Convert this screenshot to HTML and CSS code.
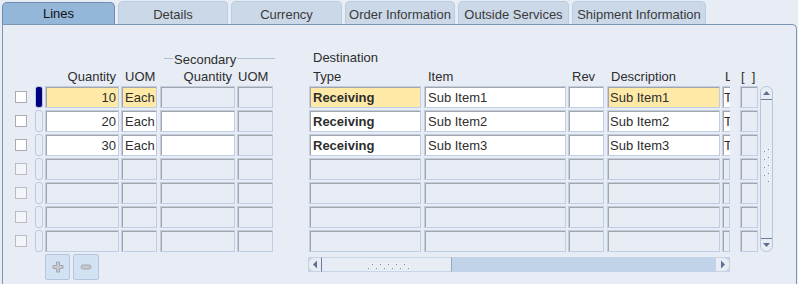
FILE: index.html
```html
<!DOCTYPE html>
<html lang="en">
<head>
  <meta charset="UTF-8"/>
  <title>Lines</title>
  <link rel="stylesheet" href="styles.css">
</head>
<body>
  <div class="tabs">
    <div class="tab active">Lines</div>
    <div class="tab">Details</div>
    <div class="tab t-111">Currency</div>
    <div class="tab">Order Information</div>
    <div class="tab t-111">Outside Services</div>
    <div class="tab t-wide">Shipment Information</div>
  </div>

  <div class="panel">
    <div class="hdr1">
      <div class="group"><span>Secondary</span></div>
      <div class="dest">Destination</div>
    </div>
    <div class="hdr2">
      <div class="w-cb"></div><div class="w-mk"></div>
      <div class="w-qty lbl-r">Quantity</div>
      <div class="w-uom lbl">UOM</div>
      <div class="w-sqty lbl-r">Quantity</div>
      <div class="w-suom lbl lbl-tight">UOM</div>
      <div class="w-type lbl">Type</div>
      <div class="w-item lbl">Item</div>
      <div class="w-rev lbl">Rev</div>
      <div class="w-desc lbl">Description</div>
      <div class="w-l lbl lbl-l">L</div>
      <div class="w-x lbl-x">[&nbsp;&nbsp;]</div>
    </div>

    <div class="grid-wrap">
      <div class="rows">
        <div class="row">
          <div class="w-cb cbx"></div><div class="w-mk mk on"></div>
          <div class="w-qty f y r">10</div><div class="w-uom f y">Each</div>
          <div class="w-sqty f"></div><div class="w-suom f"></div>
          <div class="w-type f y b">Receiving</div><div class="w-item f w">Sub Item1</div>
          <div class="w-rev f w"></div><div class="w-desc f y d">Sub Item1</div>
          <div class="w-l f w t">T</div><div class="w-x f"></div>
        </div>
        <div class="row">
          <div class="w-cb cbx"></div><div class="w-mk mk"></div>
          <div class="w-qty f w r">20</div><div class="w-uom f w">Each</div>
          <div class="w-sqty f w"></div><div class="w-suom f"></div>
          <div class="w-type f w b">Receiving</div><div class="w-item f w">Sub Item2</div>
          <div class="w-rev f w"></div><div class="w-desc f w d">Sub Item2</div>
          <div class="w-l f w t">T</div><div class="w-x f"></div>
        </div>
        <div class="row">
          <div class="w-cb cbx"></div><div class="w-mk mk"></div>
          <div class="w-qty f w r">30</div><div class="w-uom f w">Each</div>
          <div class="w-sqty f w"></div><div class="w-suom f"></div>
          <div class="w-type f w b">Receiving</div><div class="w-item f w">Sub Item3</div>
          <div class="w-rev f w"></div><div class="w-desc f w d">Sub Item3</div>
          <div class="w-l f w t">T</div><div class="w-x f"></div>
        </div>
        <div class="row empty">
          <div class="w-cb cbx"></div><div class="w-mk mk"></div>
          <div class="w-qty f"></div><div class="w-uom f"></div><div class="w-sqty f"></div><div class="w-suom f"></div>
          <div class="w-type f"></div><div class="w-item f"></div><div class="w-rev f"></div><div class="w-desc f"></div>
          <div class="w-l f"></div><div class="w-x f"></div>
        </div>
        <div class="row empty">
          <div class="w-cb cbx"></div><div class="w-mk mk"></div>
          <div class="w-qty f"></div><div class="w-uom f"></div><div class="w-sqty f"></div><div class="w-suom f"></div>
          <div class="w-type f"></div><div class="w-item f"></div><div class="w-rev f"></div><div class="w-desc f"></div>
          <div class="w-l f"></div><div class="w-x f"></div>
        </div>
        <div class="row empty">
          <div class="w-cb cbx"></div><div class="w-mk mk"></div>
          <div class="w-qty f"></div><div class="w-uom f"></div><div class="w-sqty f"></div><div class="w-suom f"></div>
          <div class="w-type f"></div><div class="w-item f"></div><div class="w-rev f"></div><div class="w-desc f"></div>
          <div class="w-l f"></div><div class="w-x f"></div>
        </div>
        <div class="row empty">
          <div class="w-cb cbx"></div><div class="w-mk mk"></div>
          <div class="w-qty f"></div><div class="w-uom f"></div><div class="w-sqty f"></div><div class="w-suom f"></div>
          <div class="w-type f"></div><div class="w-item f"></div><div class="w-rev f"></div><div class="w-desc f"></div>
          <div class="w-l f"></div><div class="w-x f"></div>
        </div>
      </div>

      <div class="vscroll">
        <div class="va va-up"><svg width="11" height="8" viewBox="0 0 11 8"><polygon points="2,5 5.5,1 9,5" fill="#5f6f8f"/></svg></div>
        <svg class="vgrip" width="8" height="36" viewBox="0 0 8 36">
          <g fill="#7d8aa2"><rect x="1" y="3" width="1" height="1"/><rect x="5" y="1" width="1" height="1"/><rect x="1" y="11" width="1" height="1"/><rect x="5" y="9" width="1" height="1"/><rect x="1" y="19" width="1" height="1"/><rect x="5" y="17" width="1" height="1"/><rect x="1" y="27" width="1" height="1"/><rect x="5" y="25" width="1" height="1"/><rect x="5" y="33" width="1" height="1"/></g>
          <g fill="#fff"><rect x="2" y="2" width="1" height="1"/><rect x="6" y="0" width="1" height="1"/><rect x="2" y="10" width="1" height="1"/><rect x="6" y="8" width="1" height="1"/><rect x="2" y="18" width="1" height="1"/><rect x="6" y="16" width="1" height="1"/><rect x="2" y="26" width="1" height="1"/><rect x="6" y="24" width="1" height="1"/><rect x="6" y="32" width="1" height="1"/></g>
        </svg>
        <div class="va va-down"><svg width="11" height="8" viewBox="0 0 11 8"><polygon points="2,3 9,3 5.5,7" fill="#5f6f8f"/></svg></div>
      </div>
    </div>

    <div class="bottom">
      <div class="btns">
        <div class="btn"><svg width="12" height="12" viewBox="0 0 12 12"><path d="M4.5 1h3v3.5H11v3H7.5V11h-3V7.5H1v-3h3.5z" fill="#c6c9cf" stroke="#a3a7ae" stroke-width="1"/></svg></div>
        <div class="btn btn-wide"><svg width="12" height="6" viewBox="0 0 12 6"><rect x="1" y="1" width="10" height="4" rx="2" fill="#c6c9cf" stroke="#a3a7ae" stroke-width="1"/></svg></div>
      </div>
      <div class="hscroll">
        <div class="ha ha-left"><svg width="8" height="11" viewBox="0 0 8 11"><polygon points="6,1.5 6,9.5 2,5.5" fill="#5f6f8f"/></svg></div>
        <div class="thumb">
          <svg width="44" height="8" viewBox="0 0 44 8">
            <g fill="#7d8aa2"><rect x="1" y="7" width="1" height="1"/><rect x="5" y="3" width="1" height="1"/><rect x="9" y="7" width="1" height="1"/><rect x="13" y="3" width="1" height="1"/><rect x="17" y="7" width="1" height="1"/><rect x="21" y="3" width="1" height="1"/><rect x="25" y="7" width="1" height="1"/><rect x="29" y="3" width="1" height="1"/><rect x="33" y="7" width="1" height="1"/><rect x="37" y="3" width="1" height="1"/><rect x="41" y="7" width="1" height="1"/></g>
            <g fill="#fff"><rect x="2" y="6" width="1" height="1"/><rect x="6" y="2" width="1" height="1"/><rect x="10" y="6" width="1" height="1"/><rect x="14" y="2" width="1" height="1"/><rect x="18" y="6" width="1" height="1"/><rect x="22" y="2" width="1" height="1"/><rect x="26" y="6" width="1" height="1"/><rect x="30" y="2" width="1" height="1"/><rect x="34" y="6" width="1" height="1"/><rect x="38" y="2" width="1" height="1"/><rect x="42" y="6" width="1" height="1"/></g>
          </svg>
        </div>
        <div class="track"></div>
        <div class="ha ha-right"><svg width="8" height="11" viewBox="0 0 8 11"><polygon points="2,1.5 2,9.5 6,5.5" fill="#5f6f8f"/></svg></div>
      </div>
    </div>
  </div>
</body>
</html>
```

FILE: styles.css
```css
/* ===== Global ===== */
* { margin:0; padding:0; box-sizing:border-box; }
body {
  font-family:"Liberation Sans", Arial, sans-serif;
  font-size:13px; color:#2e2e2e;
  background:#e8edf5;
  width:798px; height:284px; overflow:hidden;
}

/* ===== Tabs ===== */
.tabs{display:flex;align-items:flex-end;gap:3px;height:24px;padding-left:2px;}
.tab{width:110px;height:23px;line-height:23px;padding-top:1px;text-align:center;background:#cbd8e8;border:1px solid #b8cbe1;border-bottom:none;border-radius:5px 5px 0 0;color:#3a3a3a;}
.tab.t-111{width:111px;}
.tab.t-wide{width:134px;}
.tab.active{width:113px;height:22px;line-height:22px;padding-top:0;background:#93b6d9;border-color:#6f8db1;color:#111;}

/* ===== Panel ===== */
.panel{margin-left:2px;width:795px;height:260px;border:1px solid #7b95b5;border-bottom:none;border-radius:0 5px 0 0;padding-top:25px;}

.hdr1{display:flex;height:19px;line-height:16px;}
.group{display:flex;align-items:center;width:111px;margin-left:161px;}
.group::before{content:"";width:9px;height:1px;background:#afbfd3;margin-right:1px;margin-top:-2px;}
.group::after{content:"";flex:1;height:1px;background:#afbfd3;margin-left:1px;margin-top:-2px;}
.dest{margin-left:38px;}

.hdr2{display:flex;height:17px;line-height:16px;}
.lbl{padding-left:4px;white-space:nowrap;overflow:hidden;}
.lbl-tight{padding-left:1px;}
.lbl-l{padding-left:3px;}
.lbl-r{text-align:right;padding-right:3px;}
.lbl-x{padding-left:1px;white-space:nowrap;}

/* column widths, shared by header and rows */
.w-cb{width:12px;margin:0 8px 0 12px;flex:none;}
.w-mk{width:8px;margin-right:2px;flex:none;}
.w-qty{width:74px;margin-right:2px;flex:none;}
.w-uom{width:36px;margin-right:3px;flex:none;}
.w-sqty{width:75px;margin-right:2px;flex:none;}
.w-suom{width:36px;margin-right:36px;flex:none;}
.w-type{width:112px;margin-right:3px;flex:none;}
.w-item{width:142px;margin-right:2px;flex:none;}
.w-rev{width:36px;margin-right:3px;flex:none;}
.w-desc{width:113px;margin-right:2px;flex:none;}
.w-l{width:8px;margin-right:10px;flex:none;}
.w-x{width:18px;margin-right:2px;flex:none;}

/* ===== Rows ===== */
.grid-wrap{display:flex;align-items:flex-start;}
.row{display:flex;height:22px;margin-bottom:2px;}
.cbx{height:12px;align-self:center;border:1px solid #a8abb0;background:#fff;}
.empty .cbx{border-color:#b9bcc2;background:#f3f5f9;}
.mk{height:22px;border:1px solid #bccbe0;border-radius:3px;background:#e8edf5;}
.mk.on{background:#00007f;}

.f{height:22px;border:1px solid #bfcee2;box-shadow:inset 1px 1px 0 #a3a5a8;background:#e8edf5;padding:2px 2px 0 3px;line-height:18px;white-space:nowrap;overflow:hidden;}
.f.w{background:#fff;}
.f.y{background:#feeaa6;}
.f.r{text-align:right;padding-right:2px;}
.f.b{font-weight:bold;}
.f.d{padding-left:2px;}
.f.t{padding:2px 0 0 1px;border-right:none;}

/* ===== Vertical scrollbar ===== */
.vscroll{width:13px;height:166px;border:1px solid #b6c7dd;border-radius:6px;background:#e8edf5;display:flex;flex-direction:column;justify-content:space-between;align-items:center;}
.va{width:11px;height:10px;display:flex;justify-content:center;}
.va-up{border-bottom:1px solid #6d7c98;margin-top:3px;}
.va-down{border-top:1px solid #6d7c98;margin-bottom:3px;align-items:flex-end;}
.vgrip{margin-top:-6px;}

/* ===== Bottom ===== */
.bottom{display:flex;align-items:flex-start;}
.btns{display:flex;gap:3px;margin-left:42px;}
.btn{width:25px;height:26px;background:#d3e2f3;border:1px solid #b3c6dd;border-radius:2px;display:flex;align-items:center;justify-content:center;}
.btn-wide{width:26px;}
.hscroll{display:flex;width:422px;height:15px;margin:3px 0 0 209px;background:#c1d3e8;}
.ha{width:14px;height:15px;background:#e8edf5;border:1px solid #c6d4e6;display:flex;align-items:center;justify-content:center;}
.ha-left{border-radius:6px 0 0 6px;border-right:1px solid #6d7c98;}
.ha-right{width:15px;border-radius:0 6px 6px 0;}
.thumb{width:130px;height:15px;background:#e8edf5;border-top:1px solid #c6d4e6;border-bottom:1px solid #c6d4e6;border-right:1px solid #98a7bc;display:flex;align-items:center;justify-content:center;padding-left:4px;}
.track{flex:1;}
```
